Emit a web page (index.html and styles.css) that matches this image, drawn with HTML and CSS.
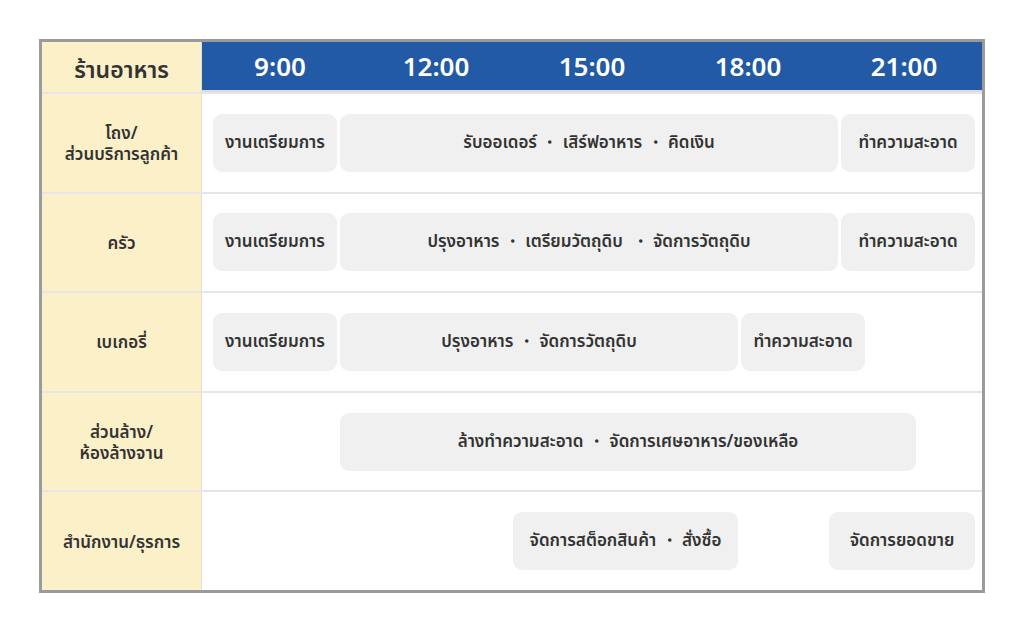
FILE: index.html
```html
<!DOCTYPE html>
<html lang="th">
<head>
<meta charset="utf-8">
<link rel="stylesheet" href="styles.css">
</head>
<body>
<div class="schedule">
  <div class="row head">
    <div class="label head-label">ร้านอาหาร</div>
    <div class="times">
      <div class="time">9:00</div>
      <div class="time">12:00</div>
      <div class="time">15:00</div>
      <div class="time">18:00</div>
      <div class="time">21:00</div>
    </div>
  </div>
  <div class="row">
    <div class="label">โถง/<br>ส่วนบริการลูกค้า</div>
    <div class="track">
      <div class="bar" style="margin-left:0;width:124px">งานเตรียมการ</div>
      <div class="bar" style="margin-left:3px;width:498px">รับออเดอร์ ・ เสิร์ฟอาหาร ・ คิดเงิน</div>
      <div class="bar" style="margin-left:3px;width:134px">ทำความสะอาด</div>
    </div>
  </div>
  <div class="row">
    <div class="label">ครัว</div>
    <div class="track">
      <div class="bar" style="margin-left:0;width:124px">งานเตรียมการ</div>
      <div class="bar" style="margin-left:3px;width:498px">ปรุงอาหาร ・ เตรียมวัตถุดิบ &nbsp;・ จัดการวัตถุดิบ</div>
      <div class="bar" style="margin-left:3px;width:134px">ทำความสะอาด</div>
    </div>
  </div>
  <div class="row">
    <div class="label">เบเกอรี่</div>
    <div class="track">
      <div class="bar" style="margin-left:0;width:124px">งานเตรียมการ</div>
      <div class="bar" style="margin-left:3px;width:398px">ปรุงอาหาร ・ จัดการวัตถุดิบ</div>
      <div class="bar" style="margin-left:3px;width:124px">ทำความสะอาด</div>
    </div>
  </div>
  <div class="row">
    <div class="label">ส่วนล้าง/<br>ห้องล้างจาน</div>
    <div class="track">
      <div class="bar" style="margin-left:127px;width:576px">ล้างทำความสะอาด ・ จัดการเศษอาหาร/ของเหลือ</div>
    </div>
  </div>
  <div class="row">
    <div class="label">สำนักงาน/ธุรการ</div>
    <div class="track">
      <div class="bar" style="margin-left:300px;width:225px">จัดการสต็อกสินค้า ・ สั่งซื้อ</div>
      <div class="bar" style="margin-left:91px;width:146px">จัดการยอดขาย</div>
    </div>
  </div>
</div>
</body>
</html>
```

FILE: styles.css
```css
* { box-sizing: border-box; }
html, body { margin: 0; padding: 0; background: #ffffff; }
body {
  font-family: "Noto Sans", "Noto Sans Thai", "Noto Sans Thai UI", sans-serif;
  color: #333333;
}
.schedule {
  margin: 39px 0 0 39px;
  width: 946px;
  height: 554px;
  border: 3px solid #9a9a9a;
  display: flex;
  flex-direction: column;
  background: #ffffff;
}
.row {
  display: flex;
  flex: 1;
  border-top: 2px solid #e6e6e6;
}
.row.head {
  flex: 0 0 50px;
  border-top: none;
}
.label {
  flex: 0 0 160px;
  background: #fcf0c9;
  border-right: 1px solid #e6e1cf;
  display: flex;
  align-items: center;
  justify-content: center;
  text-align: center;
  font-size: 17px;
  font-weight: 600;
  line-height: 21px;
  color: #333333;
}
.head-label {
  font-size: 23px;
  line-height: 26px;
  padding-top: 3px;
}
.times {
  flex: 1;
  display: flex;
  background: #235aa5;
  border-bottom: 2px solid #dcdcdc;
}
.time {
  flex: 1;
  display: flex;
  align-items: center;
  justify-content: center;
  color: #ffffff;
  font-size: 26px;
  font-weight: 600;
}
.track {
  flex: 1;
  display: flex;
  align-items: center;
  padding-left: 11px;
}
.bar {
  flex: 0 0 auto;
  height: 58px;
  background: #f0f0f0;
  border-radius: 9px;
  display: flex;
  align-items: center;
  justify-content: center;
  font-size: 17px;
  font-weight: 600;
  color: #333333;
  white-space: nowrap;
}
```
